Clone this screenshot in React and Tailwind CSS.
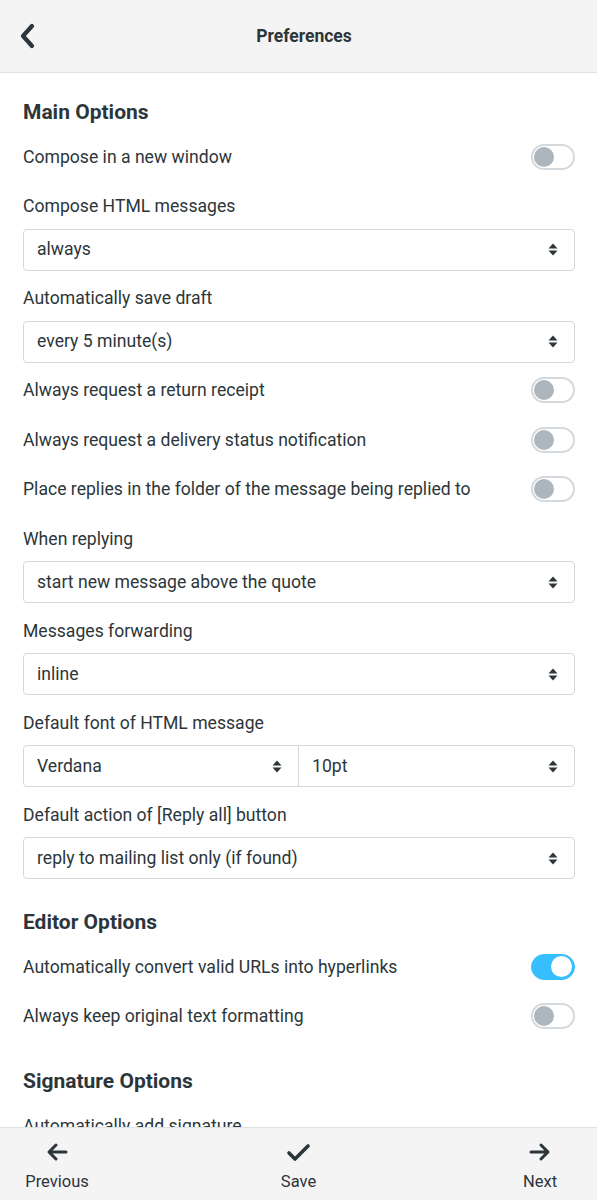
import React from 'react';

const font = { fontFamily: 'Roboto, "Liberation Sans", sans-serif' };

const SortIcon = () => (
  <svg width="10" height="13" viewBox="0 0 10 13" className="shrink-0">
    <path d="M5 0.5 L9.5 5.5 H0.5 Z" fill="#2c363a" />
    <path d="M5 12.5 L9.5 7.5 H0.5 Z" fill="#2c363a" />
  </svg>
);

const Toggle = ({ on }) =>
  on ? (
    <div className="w-[44px] h-[26px] rounded-full bg-[#37beff] border border-[#37beff] flex items-center justify-end pr-[2px] shrink-0">
      <div className="w-[21px] h-[21px] rounded-full bg-white" />
    </div>
  ) : (
    <div className="w-[44px] h-[26px] rounded-full bg-white border-2 border-[#d4d9dd] flex items-center pl-[1px] shrink-0">
      <div className="w-[20px] h-[20px] rounded-full bg-[#adb5bd]" />
    </div>
  );

const Select = ({ value, className = '' }) => (
  <div className={`flex items-center justify-between pl-[13px] pr-[16px] text-[17.6px] text-[#2c363a] ${className}`}>
    <span>{value}</span>
    <SortIcon />
  </div>
);

const ToggleRow = ({ label, on }) => (
  <div className="h-[49.5px] flex items-center justify-between">
    <span className="text-[17.6px] text-[#2c363a]">{label}</span>
    <Toggle on={on} />
  </div>
);

const Label = ({ children }) => (
  <div className="h-[24px] flex items-center text-[17.6px] text-[#2c363a] mb-[10px]">{children}</div>
);

const SelectRow = ({ label, value }) => (
  <div className="pt-[13px] pb-[3px]">
    <Label>{label}</Label>
    <Select value={value} className="h-[42px] border border-[#d4d9dd] rounded-[4px]" />
  </div>
);

const Heading = ({ children, first }) => (
  <h2 className={`h-[38px] flex items-center text-[21px] font-bold text-[#2c363a] ${first ? '' : 'mt-[22px]'}`}>
    {children}
  </h2>
);

export default function App() {
  return (
    <div className="h-[1200px] flex flex-col bg-white" style={font}>
      <header className="h-[73px] shrink-0 bg-[#f4f4f4] border-b border-[#dee2e5] flex items-center">
        <svg width="20" height="28" viewBox="0 0 20 28" className="ml-[18px]">
          <path d="M14 4 L5 14 L14 24" fill="none" stroke="#2c363a" strokeWidth="4.2" strokeLinecap="round" strokeLinejoin="round" />
        </svg>
        <h1 className="flex-1 text-center text-[17.5px] font-bold text-[#2c363a] pr-[27px]">Preferences</h1>
      </header>

      <main className="flex-1 overflow-hidden pl-[23px] pr-[22px] pt-[21px]">
        <Heading first>Main Options</Heading>
        <ToggleRow label="Compose in a new window" />
        <SelectRow label="Compose HTML messages" value="always" />
        <SelectRow label="Automatically save draft" value="every 5 minute(s)" />
        <ToggleRow label="Always request a return receipt" />
        <ToggleRow label="Always request a delivery status notification" />
        <ToggleRow label="Place replies in the folder of the message being replied to" />
        <SelectRow label="When replying" value="start new message above the quote" />
        <SelectRow label="Messages forwarding" value="inline" />
        <div className="pt-[13px] pb-[3px]">
          <Label>Default font of HTML message</Label>
          <div className="h-[42px] flex border border-[#d4d9dd] rounded-[4px]">
            <Select value="Verdana" className="w-1/2 border-r border-[#d4d9dd]" />
            <Select value="10pt" className="w-1/2" />
          </div>
        </div>
        <SelectRow label="Default action of [Reply all] button" value="reply to mailing list only (if found)" />

        <Heading>Editor Options</Heading>
        <ToggleRow label="Automatically convert valid URLs into hyperlinks" on />
        <ToggleRow label="Always keep original text formatting" />

        <Heading>Signature Options</Heading>
        <div className="pt-[13px]">
          <Label>Automatically add signature</Label>
        </div>
      </main>

      <footer className="h-[73px] shrink-0 bg-[#f4f4f4] border-t border-[#dee2e5] flex items-start justify-between px-[22px] pt-[14px] text-[16.5px] text-[#2c363a]">
        <div className="flex flex-col items-center w-[70px]">
          <svg width="22" height="20" viewBox="0 0 22 20">
            <path d="M20 10 H4 M10 3 L3 10 L10 17" fill="none" stroke="#2c363a" strokeWidth="3" strokeLinecap="round" strokeLinejoin="round" />
          </svg>
          <span className="mt-[8px]">Previous</span>
        </div>
        <div className="flex flex-col items-center w-[70px]">
          <svg width="26" height="20" viewBox="0 0 26 20">
            <path d="M3 11 L9 17 L22 4" fill="none" stroke="#2c363a" strokeWidth="3.6" strokeLinecap="round" strokeLinejoin="round" />
          </svg>
          <span className="mt-[8px]">Save</span>
        </div>
        <div className="flex flex-col items-center w-[70px]">
          <svg width="22" height="20" viewBox="0 0 22 20">
            <path d="M2 10 H18 M12 3 L19 10 L12 17" fill="none" stroke="#2c363a" strokeWidth="3" strokeLinecap="round" strokeLinejoin="round" />
          </svg>
          <span className="mt-[8px]">Next</span>
        </div>
      </footer>
    </div>
  );
}
